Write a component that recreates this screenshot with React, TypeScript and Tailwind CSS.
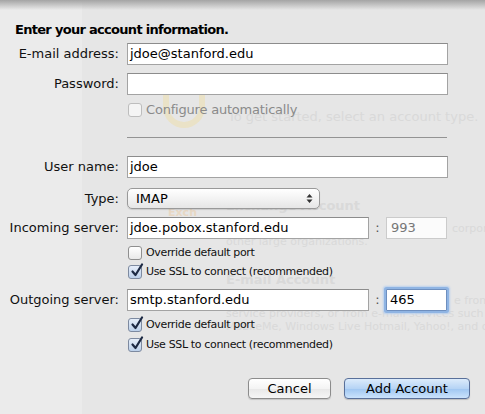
import React from 'react';

const font = { fontFamily: '"DejaVu Sans", "Liberation Sans", sans-serif' };

const Check: React.FC<{ checked?: boolean; disabled?: boolean }> = ({ checked, disabled }) => (
  <div
    className={
      'relative w-[14px] h-[14px] rounded-[3px] border shrink-0 ' +
      (disabled
        ? 'border-[#bdbdbd] bg-[#f4f4f4]'
        : checked
          ? 'border-[#7d8aa0] bg-[linear-gradient(#e6eefa,#bcd0ea)]'
          : 'border-[#8f8f8f] bg-[linear-gradient(#ffffff,#e9e9e9)]')
    }
  >
    {checked && (
      <svg className="absolute left-[1px] top-[-3px]" width="14" height="15" viewBox="0 0 14 15">
        <path d="M2.5 8.5 L5.5 12 L12 1.5" fill="none" stroke="#1d2a44" strokeWidth="2.2" strokeLinecap="round" strokeLinejoin="round" />
      </svg>
    )}
  </div>
);

const CheckRow: React.FC<{ label: string; checked?: boolean; disabled?: boolean; big?: boolean; className?: string }> = ({
  label,
  checked,
  disabled,
  big,
  className,
}) => (
  <div className={'flex items-center h-[16px] pl-[128px] gap-[4px] ' + (className || '')}>
    <Check checked={checked} disabled={disabled} />
    <span
      className={
        (big ? 'text-[13px] tracking-[-0.2px] ' : 'text-[11px] tracking-[-0.35px] ') +
        (disabled ? 'text-[#8a8a8a]' : 'text-[#111]')
      }
    >
      {label}
    </span>
  </div>
);

const Field: React.FC<{ value?: string; className?: string }> = ({ value, className }) => (
  <div
    className={
      'h-[22px] bg-white border border-[#a3a3a3] border-t-[#8c8c8c] flex items-center pl-[2px] text-[13px] text-black ' +
      (className || '')
    }
  >
    {value}
  </div>
);

const Row: React.FC<{ label: string; className?: string; children: React.ReactNode }> = ({ label, className, children }) => (
  <div className={'flex items-center ' + (className || '')}>
    <div className="w-[120px] text-right text-[13px] text-[#111] pr-[1px] whitespace-nowrap">{label}</div>
    <div className="ml-[7px] flex items-center">{children}</div>
  </div>
);

const Port: React.FC<{ value: string; focused?: boolean }> = ({ value, focused }) => (
  <>
    <span className="w-[17px] text-center text-[13px] text-[#555]">:</span>
    {focused ? (
      <div className="h-[22px] w-[61px] bg-white border border-[#6e8fbf] rounded-[1px] shadow-[0_0_0_2px_#8fb4e3,0_0_2px_3px_#b9d0ee] flex items-center pl-[3px] text-[13px] text-black">
        {value}
      </div>
    ) : (
      <div className="h-[22px] w-[61px] bg-[#fbfbfb] border border-[#cbcbcb] flex items-center pl-[4px] text-[13px] text-[#777]">
        {value}
      </div>
    )}
  </>
);

export default function App() {
  return (
    <div
      className="relative w-[485px] h-[414px] overflow-hidden bg-[linear-gradient(to_right,#ebebeb_82px,#e6e6e6_82px)]"
      style={font}
    >
      {/* faded window content behind the sheet */}
      <div className="absolute inset-0 text-[#d9d9d9] pointer-events-none">
        <div className="absolute left-[163px] top-[94px] w-[42px] h-[34px] rounded-b-full border-[6px] border-t-0 border-[#eae2c7]" />
        <div className="absolute left-[228px] top-[107px] text-[13px] whitespace-nowrap">To get started, select an account type.</div>
        <div className="absolute left-[168px] top-[205px] text-[11px] font-bold text-[#e8d8c4]">Exch</div>
        <div className="absolute left-[226px] top-[196px] text-[13px] font-bold whitespace-nowrap">Exchange Account</div>
        <div className="absolute left-[452px] top-[222px] text-[11px] leading-[13px] whitespace-nowrap">corpor</div>
        <div className="absolute left-[226px] top-[235px] text-[11px] leading-[13px] whitespace-nowrap">other large organizations.</div>
        <div className="absolute left-[226px] top-[270px] text-[13px] font-bold whitespace-nowrap">E-mail Account</div>
        <div className="absolute left-[454px] top-[294px] text-[11px] leading-[13px] whitespace-nowrap">e from</div>
        <div className="absolute left-[226px] top-[307px] text-[11px] leading-[13px] whitespace-nowrap">
          service providers, or from e-mail services such a
          <br />
          MobileMe, Windows Live Hotmail, Yahoo!, and ot
        </div>
      </div>
      <div className="absolute top-0 left-0 right-0 h-[10px] bg-[linear-gradient(#a4a4a4,rgba(230,230,230,0))]" />

      <div className="relative flex flex-col">
        <div className="mt-[22px] ml-[15px] h-[16px] leading-[16px] text-[13px] font-bold tracking-[-0.7px] text-black">
          Enter your account information.
        </div>
        <Row label="E-mail address:" className="mt-[5px]">
          <Field value="jdoe@stanford.edu" className="w-[321px]" />
        </Row>
        <Row label="Password:" className="mt-[8px]">
          <Field className="w-[321px]" />
        </Row>
        <CheckRow label="Configure automatically" disabled big className="mt-[7px]" />
        <div className="mt-[19px] ml-[127px] w-[320px] h-px bg-[#939393]" />
        <Row label="User name:" className="mt-[18px]">
          <Field value="jdoe" className="w-[321px]" />
        </Row>
        <Row label="Type:" className="mt-[10px]">
          <div className="h-[21px] w-[193px] rounded-[5px] border border-[#999] bg-[linear-gradient(#ffffff,#f3f3f3_50%,#e6e6e6)] shadow-[0_1px_1px_rgba(0,0,0,0.12)] flex items-center justify-between pl-[8px] pr-[6px] text-[13px] text-black">
            <span>IMAP</span>
            <svg width="7" height="11" viewBox="0 0 7 11">
              <path d="M0.5 4.5 L3.5 1 L6.5 4.5 Z M0.5 6.5 L3.5 10 L6.5 6.5 Z" fill="#333" />
            </svg>
          </div>
        </Row>
        <Row label="Incoming server:" className="mt-[8px]">
          <Field value="jdoe.pobox.stanford.edu" className="w-[242px]" />
          <Port value="993" />
        </Row>
        <CheckRow label="Override default port" className="mt-[6px]" />
        <CheckRow label="Use SSL to connect (recommended)" checked className="mt-[3px]" />
        <Row label="Outgoing server:" className="mt-[9px]">
          <Field value="smtp.stanford.edu" className="w-[242px]" />
          <Port value="465" focused />
        </Row>
        <CheckRow label="Override default port" checked className="mt-[6px]" />
        <CheckRow label="Use SSL to connect (recommended)" checked className="mt-[4px]" />
        <div className="mt-[25px] flex justify-end pr-[15px] gap-[13px]">
          <button className="h-[21px] w-[83px] rounded-[4px] border border-[#8c8c8c] bg-[linear-gradient(#ffffff,#f4f4f4_50%,#e8e8e8_51%,#f6f6f6)] shadow-[0_1px_1px_rgba(0,0,0,0.15)] text-[13px] text-black">
            Cancel
          </button>
          <button className="h-[21px] w-[126px] rounded-[4px] border border-[#59709a] bg-[linear-gradient(#dcebfb,#b6d4f5_50%,#9fc6f1_51%,#cbe3fc)] shadow-[0_1px_1px_rgba(0,0,0,0.18)] text-[13px] text-black">
            Add Account
          </button>
        </div>
      </div>
    </div>
  );
}
